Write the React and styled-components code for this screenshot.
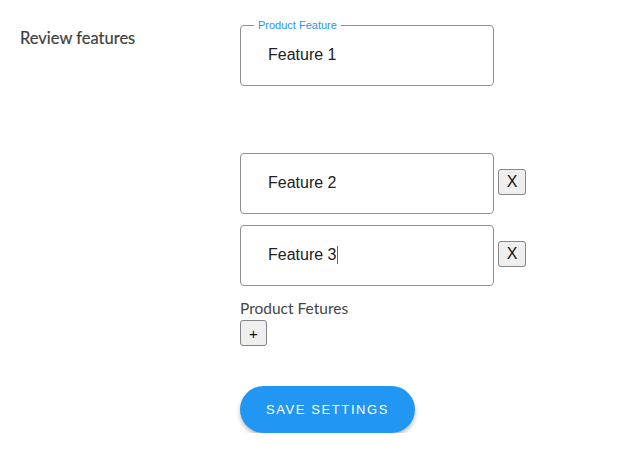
import styled, { createGlobalStyle } from 'styled-components';

const GlobalStyle = createGlobalStyle`
  body {
    margin: 0;
    background: #ffffff;
    font-family: 'Liberation Sans', Arial, sans-serif;
  }
`;

const features = [
  { id: 1, value: 'Feature 1', legend: 'Product Feature', removable: false },
  { id: 2, value: 'Feature 2', removable: true },
  { id: 3, value: 'Feature 3', removable: true, caret: true },
];

function App() {
  return (
    <>
      <GlobalStyle />
      <Page>
        <SectionLabel>Review features</SectionLabel>
        <FieldColumn>
          {features.map((f) => (
            <FeatureRow key={f.id} $spaced={f.id === 1}>
              <Field>
                {f.legend && <Legend>{f.legend}</Legend>}
                <FieldText>
                  {f.value}
                  {f.caret && <Caret />}
                </FieldText>
              </Field>
              {f.removable && <RemoveButton>X</RemoveButton>}
            </FeatureRow>
          ))}
          <FieldsCaption>Product Fetures</FieldsCaption>
          <AddButton>+</AddButton>
          <SaveButton>Save Settings</SaveButton>
        </FieldColumn>
      </Page>
    </>
  );
}

const Page = styled.div`
  display: flex;
  align-items: flex-start;
  padding: 19px 0 0 20px;
`;

const SectionLabel = styled.div`
  width: 220px;
  padding-top: 9px;
  font-family: 'Lato', sans-serif;
  font-size: 16.5px;
  color: #3f3f3f;
  -webkit-text-stroke: 0.2px #3f3f3f;
`;

const FieldColumn = styled.div`
  display: flex;
  flex-direction: column;
  align-items: flex-start;
`;

const FeatureRow = styled.div`
  display: flex;
  align-items: flex-start;
  gap: 4px;
  margin-top: 6px;
  margin-bottom: ${(p) => (p.$spaced ? '61px' : '5px')};
`;

const Field = styled.div`
  position: relative;
  box-sizing: border-box;
  width: 254px;
  height: 61px;
  border: 1px solid #8f8f8f;
  border-radius: 4px;
  display: flex;
  align-items: center;
  padding: 0 0 1px 27px;
`;

const Legend = styled.span`
  position: absolute;
  top: -8px;
  left: 13px;
  padding: 0 4px;
  background: #ffffff;
  font-size: 11px;
  line-height: 14px;
  color: #2196f3;
`;

const FieldText = styled.span`
  display: flex;
  align-items: center;
  font-size: 16px;
  color: #222222;
`;

const Caret = styled.span`
  display: inline-block;
  width: 1px;
  height: 18px;
  margin-left: 1px;
  background: #1a73e8;
`;

const SmallButton = styled.button`
  box-sizing: border-box;
  width: 28px;
  height: 26px;
  padding: 0;
  border: 1px solid #858585;
  border-radius: 3px;
  background: #efefef;
  font-family: 'Liberation Sans', Arial, sans-serif;
  font-size: 16px;
  color: #111111;
`;

const RemoveButton = styled(SmallButton)`
  margin-top: 16px;
`;

const FieldsCaption = styled.div`
  margin-top: 8px;
  font-family: 'Lato', sans-serif;
  font-size: 15.5px;
  color: #444444;
`;

const AddButton = styled(SmallButton)`
  width: 27px;
  margin-top: 3px;
  font-size: 15px;
`;

const SaveButton = styled.button`
  margin-top: 40px;
  width: 175px;
  height: 47px;
  border: none;
  border-radius: 24px;
  background: #2196f3;
  color: #ffffff;
  font-family: 'Liberation Sans', Arial, sans-serif;
  font-size: 13px;
  letter-spacing: 1.6px;
  text-transform: uppercase;
  box-shadow: 0 3px 4px rgba(0, 0, 0, 0.25);
`;

export default App;
